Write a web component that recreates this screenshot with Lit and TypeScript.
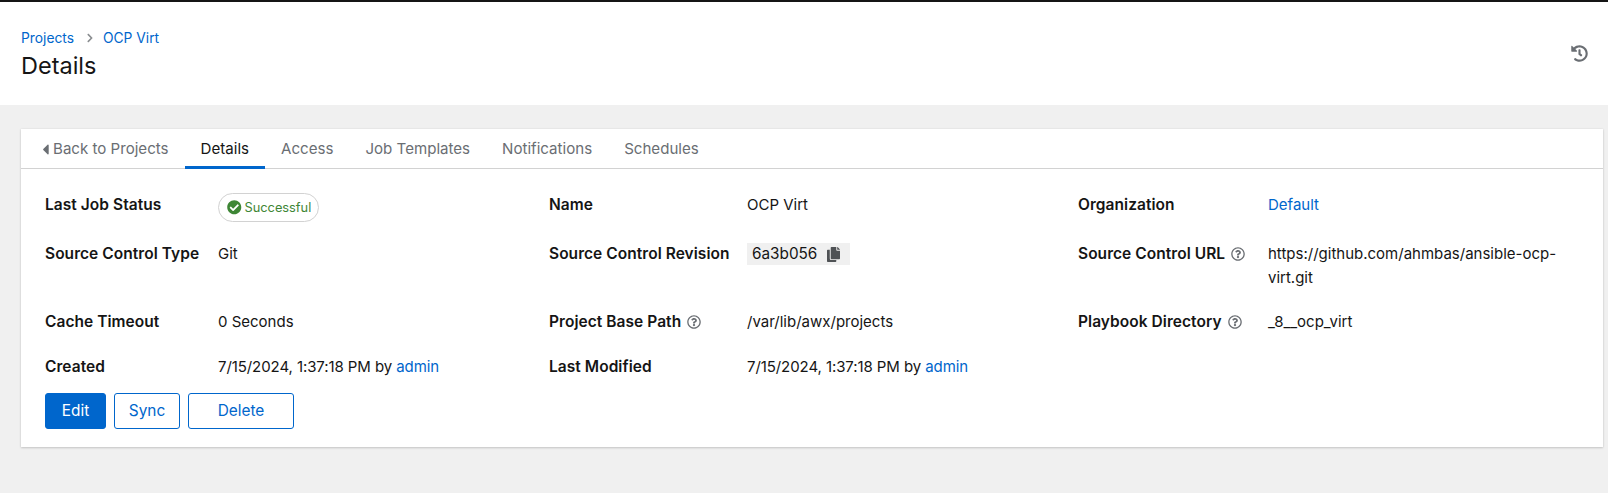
import { LitElement, html, css, svg } from "lit";
import { customElement } from "lit/decorators.js";

const icon = (vb: string, d: string, cls: string) =>
  html`<svg class=${cls} viewBox=${vb} fill="currentColor" aria-hidden="true">${svg`<path d=${d}></path>`}</svg>`;

const HISTORY = "M504 255.531c.253 136.64-111.18 248.372-247.82 248.468-59.015.042-113.223-20.53-155.822-54.911-11.077-8.94-11.905-25.541-1.839-35.607l11.267-11.267c8.609-8.609 22.353-9.551 31.891-1.984C173.062 425.135 212.781 440 256 440c101.705 0 184-82.311 184-184 0-101.705-82.311-184-184-184-48.814 0-93.149 18.969-126.068 49.932l50.754 50.754c10.08 10.08 2.941 27.314-11.313 27.314H24c-8.837 0-16-7.163-16-16V38.627c0-14.254 17.234-21.393 27.314-11.314l49.372 49.372C129.209 34.136 189.552 8 256 8c136.81 0 247.747 110.78 248 247.531zm-180.912 78.784l9.823-12.63c8.138-10.463 6.253-25.542-4.21-33.679L288 256.349V152c0-13.255-10.745-24-24-24h-16c-13.255 0-24 10.745-24 24v135.651l65.409 50.874c10.463 8.137 25.541 6.253 33.679-4.21z";
const CHECK = "M504 256c0 136.967-111.033 248-248 248S8 392.967 8 256 119.033 8 256 8s248 111.033 248 248zM227.314 387.314l184-184c6.248-6.248 6.248-16.379 0-22.627l-22.627-22.627c-6.248-6.249-16.379-6.249-22.628 0L216 308.118l-70.059-70.059c-6.248-6.248-16.379-6.248-22.628 0l-22.627 22.627c-6.248 6.248-6.248 16.379 0 22.627l104 104c6.249 6.249 16.379 6.249 22.628.001z";
const HELP = "M256 8C119.043 8 8 119.083 8 256c0 136.997 111.043 248 248 248s248-111.003 248-248C504 119.083 392.957 8 256 8zm0 448c-110.532 0-200-89.431-200-200 0-110.495 89.472-200 200-200 110.491 0 200 89.471 200 200 0 110.53-89.431 200-200 200zm107.244-255.2c0 67.052-72.421 68.084-72.421 92.863V300c0 6.627-5.373 12-12 12h-45.647c-6.627 0-12-5.373-12-12v-8.659c0-35.745 27.1-50.034 47.579-61.516 17.561-9.845 28.324-16.541 28.324-29.579 0-17.246-21.999-28.693-39.784-28.693-23.189 0-33.894 10.977-48.942 29.969-4.057 5.12-11.46 6.071-16.666 2.124l-27.824-21.098c-5.107-3.872-6.251-11.066-2.644-16.363C184.846 131.491 214.94 112 261.794 112c49.071 0 101.45 38.304 101.45 88.8zM298 368c0 23.159-18.841 42-42 42s-42-18.841-42-42 18.841-42 42-42 42 18.841 42 42z";
const COPY = "M320 448v40c0 13.255-10.745 24-24 24H24c-13.255 0-24-10.745-24-24V120c0-13.255 10.745-24 24-24h72v296c0 30.879 25.121 56 56 56h168zm0-344V0H152c-13.255 0-24 10.745-24 24v368c0 13.255 10.745 24 24 24h272c13.255 0 24-10.745 24-24V128H344c-13.2 0-24-10.8-24-24zm120.971-31.029L375.029 7.029A24 24 0 0 0 358.059 0H352v96h96v-6.059a24 24 0 0 0-7.029-16.97z";
const CARET = "M192 127.338v257.324c0 17.818-21.543 26.741-34.142 14.142L29.196 270.142c-7.81-7.81-7.81-20.474 0-28.284l128.662-128.662c12.599-12.6 34.142-3.676 34.142 14.142z";
const ANGLE = "M285.476 272.971L91.132 467.314c-9.373 9.373-24.569 9.373-33.941 0l-22.667-22.667c-9.357-9.357-9.375-24.522-.04-33.901L188.505 256 34.484 101.255c-9.335-9.379-9.317-24.544.04-33.901l22.667-22.667c9.373-9.373 24.569-9.373 33.941 0L285.475 239.03c9.373 9.372 9.373 24.568.001 33.941z";

@customElement("app-root")
export class AppRoot extends LitElement {
  static styles = css`
    :host {
      display: block;
      min-height: 493px;
      background: #f0f0f0;
      font-family: Inter, "Liberation Sans", sans-serif;
      font-size: 15px;
      line-height: 24px;
      color: #151515;
      box-sizing: border-box;
      border-top: 2px solid #151515;
    }
    a { color: #06c; text-decoration: none; }
    .header {
      background: #fff;
      height: 103px;
      box-sizing: border-box;
      padding: 24px 20px 0 21px;
      display: flex;
      justify-content: space-between;
    }
    .crumbs { display: flex; align-items: center; height: 24px; font-size: 13.8px; }
    .sep { width: 8px; height: 10px; margin: 0 9px 0 12px; color: #8a8d90; }
    h1 { margin: 1px 0 0; font-size: 23.5px; font-weight: 400; line-height: 30px; }
    .history { width: 17px; height: 17px; color: #6a6e73; margin-top: 19px; flex: none; }
    .section { padding: 24px 5px 45px 21px; }
    .card { background: #fff; box-shadow: 0 1px 2px rgba(3,3,3,.16), 0 0 2px rgba(3,3,3,.08); }
    .tabs {
      display: flex;
      height: 40px;
      box-sizing: border-box;
      border-bottom: 1px solid #d2d2d2;
      font-size: 15.1px;
    }
    .tab {
      display: flex;
      align-items: center;
      padding: 3px 16px 0;
      color: #6a6e73;
      margin-bottom: -1px;
      border-bottom: 3px solid transparent;
      height: 40px;
      box-sizing: border-box;
    }
    .tab.on { color: #151515; border-bottom-color: #06c; }
    .tab.back { padding-left: 21px; gap: 4px; }
    .caret { width: 7px; height: 17px; }
    .grid {
      display: grid;
      grid-template-columns: 173px 331px 198px 331px 190px 1fr;
      grid-template-rows: auto auto 25px auto;
      row-gap: 20px;
      padding: 24px 24px 0;
      align-items: start;
    }
    .label { font-size: 15.5px; letter-spacing: .05px; font-weight: 600; display: flex; align-items: center; gap: 6px; }
    .help { width: 14px; height: 14px; color: #6a6e73; flex: none; }
    .date { letter-spacing: -.08px; }
    .badge {
      display: inline-flex;
      align-items: center;
      gap: 3px;
      height: 29px;
      box-sizing: border-box;
      padding: 0 7px 0 8px;
      border: 1px solid #d2d2d2;
      border-radius: 15px;
      color: #3e8635;
      font-size: 12.8px;
    }
    .check { width: 14.5px; height: 14.5px; }
    .code {
      display: inline-flex;
      align-items: center;
      width: 103px;
      height: 22px;
      box-sizing: border-box;
      padding-left: 5px;
      gap: 10px;
      background: #f0f0f0;
      font-size: 15.3px;
    }
    .copy { width: 13px; height: 15px; color: #4f5255; }
    .actions { display: flex; gap: 8px; padding: 14px 24px 18px; }
    button {
      font: inherit;
      font-size: 15.4px;
      height: 36px;
      border-radius: 3px;
      background: #fff;
      color: #06c;
      border: 1px solid #06c;
      padding: 0;
      box-sizing: border-box;
    }
    button.primary { background: #06c; color: #fff; width: 61px; }
    button.sync { width: 66px; }
    button.del { width: 106px; }
  `;

  private help() {
    return icon("0 0 512 512", HELP, "help");
  }

  render() {
    return html`
      <div class="header">
        <div>
          <div class="crumbs">
            <a href="#">Projects</a>
            ${icon("0 0 320 512", ANGLE, "sep")}
            <a href="#">OCP Virt</a>
          </div>
          <h1>Details</h1>
        </div>
        ${icon("0 0 512 512", HISTORY, "history")}
      </div>
      <div class="section">
        <div class="card">
          <div class="tabs">
            <div class="tab back">${icon("0 0 192 512", CARET, "caret")}Back to Projects</div>
            <div class="tab on">Details</div>
            <div class="tab">Access</div>
            <div class="tab">Job Templates</div>
            <div class="tab">Notifications</div>
            <div class="tab">Schedules</div>
          </div>
          <div class="grid">
            <div class="label">Last Job Status</div>
            <div><span class="badge">${icon("0 0 512 512", CHECK, "check")}Successful</span></div>
            <div class="label">Name</div>
            <div>OCP Virt</div>
            <div class="label">Organization</div>
            <div><a href="#">Default</a></div>

            <div class="label">Source Control Type</div>
            <div>Git</div>
            <div class="label">Source Control Revision</div>
            <div><span class="code">6a3b056 ${icon("0 0 448 512", COPY, "copy")}</span></div>
            <div class="label">Source Control URL ${this.help()}</div>
            <div>https://github.com/ahmbas/ansible-ocp-<br />virt.git</div>

            <div class="label">Cache Timeout</div>
            <div>0 Seconds</div>
            <div class="label">Project Base Path ${this.help()}</div>
            <div>/var/lib/awx/projects</div>
            <div class="label">Playbook Directory ${this.help()}</div>
            <div>_8__ocp_virt</div>

            <div class="label">Created</div>
            <div class="date">7/15/2024, 1:37:18 PM by <a href="#">admin</a></div>
            <div class="label">Last Modified</div>
            <div class="date">7/15/2024, 1:37:18 PM by <a href="#">admin</a></div>
          </div>
          <div class="actions">
            <button class="primary">Edit</button>
            <button class="sync">Sync</button>
            <button class="del">Delete</button>
          </div>
        </div>
      </div>
    `;
  }
}
